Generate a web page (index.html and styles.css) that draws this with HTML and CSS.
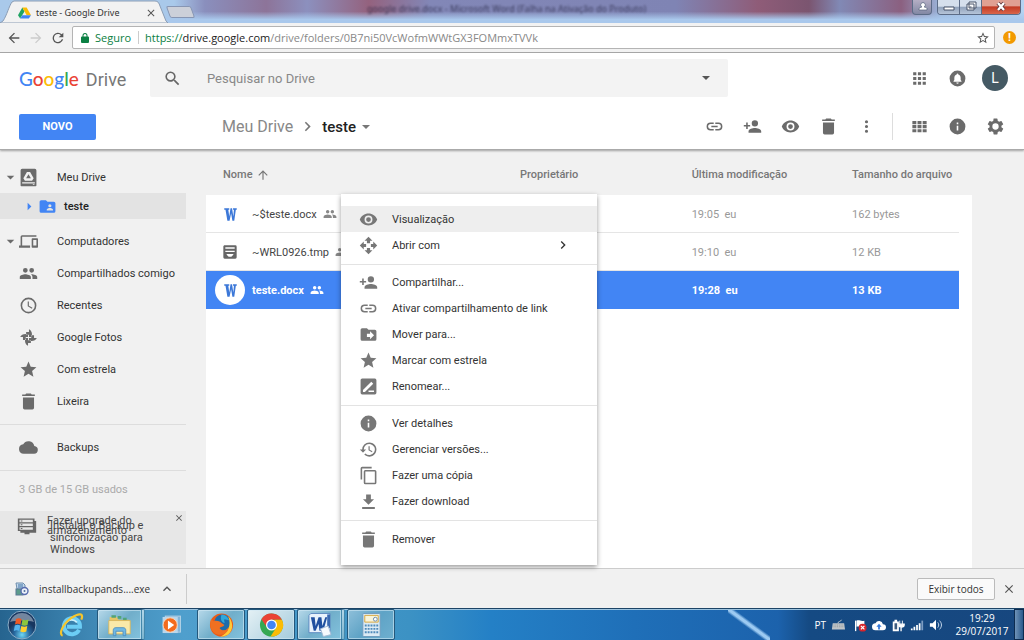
FILE: index.html
```html
<!DOCTYPE html>
<html lang="pt-BR">
<head>
<meta charset="utf-8">
<title>teste - Google Drive</title>
<link rel="stylesheet" href="styles.css">
</head>
<body>
<svg class="sprite" aria-hidden="true">
  <symbol id="search" viewBox="0 0 24 24"><path d="M15.5 14h-.79l-.28-.27A6.47 6.47 0 0 0 16 9.5 6.5 6.5 0 1 0 9.500 16c1.610 0 3.090-.59 4.230-1.570l.27.28v.79l5 4.990L20.490 19l-4.990-5zm-6 0C7.010 14 5 11.990 5 9.500S7.010 5 9.500 5 14 7.010 14 9.500 11.990 14 9.500 14z"/></symbol>
  <symbol id="apps" viewBox="0 0 24 24"><path d="M4 8h4V4H4v4zm6 12h4v-4h-4v4zm-6 0h4v-4H4v4zm0-6h4v-4H4v4zm6 0h4v-4h-4v4zm6-10v4h4V4h-4zm-6 4h4V4h-4v4zm6 6h4v-4h-4v4zm0 6h4v-4h-4v4z"/></symbol>
  <symbol id="bell" viewBox="0 0 24 24"><path fill-rule="evenodd" d="M12 2a10 10 0 1 0 0 20 10 10 0 0 0 0-20zm0 16.500a1.500 1.500 0 0 1-1.500-1.500h3a1.500 1.500 0 0 1-1.500 1.500zM17 16H7v-1l1-1v-2.600c0-2.100 1-3.800 3-4.300v-.5a1 1 0 0 1 2 0v.5c2 .5 3 2.200 3 4.300V14l1 1v1z"/></symbol>
  <symbol id="link" viewBox="0 0 24 24"><path d="M3.900 12c0-1.710 1.390-3.100 3.100-3.100h4V7H7a5 5 0 0 0 0 10h4v-1.900H7A3.100 3.100 0 0 1 3.900 12zM8 13h8v-2H8v2zm9-6h-4v1.900h4a3.100 3.100 0 0 1 0 6.200h-4V17h4a5 5 0 0 0 0-10z"/></symbol>
  <symbol id="person-add" viewBox="0 0 24 24"><path d="M15 12a4 4 0 1 0 0-8 4 4 0 0 0 0 8zm-9-2V7H4v3H1v2h3v3h2v-3h3v-2H6zm9 4c-2.670 0-8 1.340-8 4v2h16v-2c0-2.660-5.330-4-8-4z"/></symbol>
  <symbol id="eye" viewBox="0 0 24 24"><path d="M12 4.500C7 4.500 2.730 7.610 1 12c1.730 4.390 6 7.500 11 7.500s9.270-3.110 11-7.500c-1.730-4.390-6-7.500-11-7.500zM12 17a5 5 0 1 1 0-10 5 5 0 0 1 0 10zm0-8a3 3 0 1 0 0 6 3 3 0 0 0 0-6z"/></symbol>
  <symbol id="trash" viewBox="0 0 24 24"><path d="M5 20a2 2 0 0 0 2 2h10a2 2 0 0 0 2-2V7H5v13zM20 3h-4l-1-1H9L8 3H4v2h16V3z"/></symbol>
  <symbol id="more" viewBox="0 0 24 24"><path d="M12 8a2 2 0 1 0 0-4 2 2 0 0 0 0 4zm0 2a2 2 0 1 0 0 4 2 2 0 0 0 0-4zm0 6a2 2 0 1 0 0 4 2 2 0 0 0 0-4z"/></symbol>
  <symbol id="grid" viewBox="0 0 24 24"><path d="M3 5h5v4H3zM9.500 5h5v4h-5zM16 5h5v4h-5zM3 10.200h5v4H3zM9.500 10.200h5v4h-5zM16 10.200h5v4h-5zM3 15.400h5v4H3zM9.500 15.400h5v4h-5zM16 15.400h5v4h-5z"/></symbol>
  <symbol id="info" viewBox="0 0 24 24"><path d="M12 2a10 10 0 1 0 0 20 10 10 0 0 0 0-20zm1 15h-2v-6h2v6zm0-8h-2V7h2v2z"/></symbol>
  <symbol id="gear" viewBox="0 0 24 24"><path d="M19.430 12.980c.04-.32.07-.64.07-.98s-.03-.66-.07-.98l2.110-1.650c.19-.15.24-.42.12-.64l-2-3.460c-.12-.22-.39-.3-.61-.22l-2.490 1c-.52-.4-1.080-.73-1.690-.98l-.38-2.650A.49.49 0 0 0 14 2h-4c-.25 0-.46.18-.49.42l-.38 2.650c-.61.25-1.170.59-1.690.98l-2.490-1c-.23-.09-.49 0-.61.22l-2 3.460c-.13.22-.07.49.12.64l2.110 1.650c-.04.32-.07.65-.07.98s.03.66.07.98l-2.110 1.650c-.19.15-.24.42-.12.64l2 3.460c.12.22.39.3.61.22l2.490-1c.52.4 1.080.73 1.690.98l.38 2.650c.03.24.24.42.49.42h4c.25 0 .46-.18.49-.42l.38-2.650c.61-.25 1.170-.59 1.690-.98l2.490 1c.23.09.49 0 .61-.22l2-3.460c.12-.22.07-.49-.12-.64l-2.110-1.650zM12 16a4 4 0 1 1 0-8 4 4 0 0 1 0 8z"/></symbol>
  <symbol id="drive" viewBox="0 0 24 24"><path fill-rule="evenodd" d="M4 1h16a2 2 0 0 1 2 2v19a1 1 0 0 1-1 1H3a1 1 0 0 1-1-1V3a2 2 0 0 1 2-2zm0 17v1.500h16V18H4zm6-13L5.500 13l2 3h9l2-3L14 5h-4zm2 3 3 5H9l3-5zm5.500 12.300v1h2v-1h-2z"/></symbol>
  <symbol id="folder-shared" viewBox="0 0 24 24"><path d="M20 6h-8l-2-2H4a2 2 0 0 0-2 2v12a2 2 0 0 0 2 2h16a2 2 0 0 0 2-2V8a2 2 0 0 0-2-2zm-5 3a2 2 0 1 1 0 4 2 2 0 0 1 0-4zm4 8h-8v-1c0-1.330 2.670-2 4-2s4 .67 4 2v1z"/></symbol>
  <symbol id="devices" viewBox="0 0 24 24"><path d="M4 6h18V4H4a2 2 0 0 0-2 2v11H0v3h14v-3H4V6zm19 2h-6a1 1 0 0 0-1 1v10a1 1 0 0 0 1 1h6a1 1 0 0 0 1-1V9a1 1 0 0 0-1-1zm-1 9h-4v-7h4v7z"/></symbol>
  <symbol id="people" viewBox="0 0 24 24"><path d="M16 11a3 3 0 1 0 0-6 3 3 0 0 0 0 6zm-8 0a3 3 0 1 0 0-6 3 3 0 0 0 0 6zm0 2c-2.330 0-7 1.170-7 3.500V19h14v-2.500C15 14.170 10.330 13 8 13zm8 0c-.29 0-.62.02-.97.05 1.160.84 1.970 1.970 1.970 3.450V19h6v-2.500c0-2.330-4.670-3.500-7-3.500z"/></symbol>
  <symbol id="clock" viewBox="0 0 24 24"><path d="M12 2a10 10 0 1 0 0 20 10 10 0 0 0 0-20zm0 18a8 8 0 1 1 0-16 8 8 0 0 1 0 16zm.5-13H11v6l5.250 3.150.75-1.230-4.500-2.670z"/></symbol>
  <symbol id="photos" viewBox="0 0 24 24"><path d="M11.400 11.400H1.500C3 8 8 6.500 11.400 8.500zM12.600 11.400V1.500C16 3 17.500 8 15.500 11.400zM12.600 12.600h9.900C21 16 16 17.500 12.600 15.500zM11.400 12.600v9.900C8 21 6.500 16 8.500 12.600zM12.600 5H9v3.500h3.600zM19 12.600V9h-3.500v3.600zM11.400 19H15v-3.500h-3.600zM5 11.400V15h3.500v-3.600z"/></symbol>
  <symbol id="star" viewBox="0 0 24 24"><path d="M12 17.270 18.180 21l-1.640-7.030L22 9.240l-7.190-.61L12 2 9.190 8.630 2 9.240l5.460 4.730L5.820 21z"/></symbol>
  <symbol id="star-line" viewBox="0 0 24 24"><path d="m22 9.240-7.190-.62L12 2 9.190 8.630 2 9.240l5.460 4.730L5.820 21 12 17.270 18.180 21l-1.630-7.030L22 9.240zM12 15.400l-3.760 2.270 1-4.280-3.320-2.880 4.380-.38L12 6.100l1.710 4.040 4.380.38-3.320 2.880 1 4.280L12 15.400z"/></symbol>
  <symbol id="cloud" viewBox="0 0 24 24"><path d="M19.350 10.040A7.490 7.490 0 0 0 5.350 8.040 6 6 0 0 0 6 20h13a5 5 0 0 0 .35-9.960z"/></symbol>
  <symbol id="storage" viewBox="0 0 24 24"><path fill-rule="evenodd" d="M1 3h20v3h2v14h-8v2H9v-2H4v-2H1V3zm2 1.500v3h16v-3H3zM3 9v3h16V9H3zM3 13.500v3h16v-3H3zM4.500 5.300h2v1.400h-2zm0 4.500h2v1.400h-2zm0 4.500h2v1.400h-2z"/></symbol>
  <symbol id="archive" viewBox="0 0 24 24"><path fill-rule="evenodd" d="M4 2h16a2 2 0 0 1 2 2v16a2 2 0 0 1-2 2H4a2 2 0 0 1-2-2V4c0-1 1-2 2-2zm1 3v2h14V5H5zm0 5v2h14v-2H5zm2 5v1l3 3h4l3-3v-1H7z"/></symbol>
  <symbol id="word" viewBox="0 0 20 24"><path d="M0 2h8v2.500H6.500L8 15l2-13h2.500l2 13 1-10.500H14V2h6v2.500h-1.500L16 22h-3L11 10 8.500 22H5L2 4.500H0z"/></symbol>
  <symbol id="open-with" viewBox="0 0 24 24"><path d="M10 9h4V6h3l-5-5-5 5h3zM9 10H6V7l-5 5 5 5v-3h3zm14 2-5-5v3h-3v4h3v3zM14 15h-4v3H7l5 5 5-5h-3z"/></symbol>
  <symbol id="move" viewBox="0 0 24 24"><path d="M20 6h-8l-2-2H4a2 2 0 0 0-2 2v12a2 2 0 0 0 2 2h16a2 2 0 0 0 2-2V8a2 2 0 0 0-2-2zm-6 12v-3h-4v-4h4V8l5 5-5 5z"/></symbol>
  <symbol id="rename" viewBox="0 0 24 24"><path fill-rule="evenodd" d="M4 2h16a2 2 0 0 1 2 2v16a2 2 0 0 1-2 2H4a2 2 0 0 1-2-2V4c0-1 1-2 2-2zm1 14.500V19h2.500L18 8.500 15.500 6zM12 17v2h7v-2z"/></symbol>
  <symbol id="history" viewBox="0 0 24 24"><path d="M13 3a9 9 0 0 0-9 9H1l3.890 3.890.07.14L9 12H6a7 7 0 1 1 2.060 4.940l-1.420 1.420A9 9 0 1 0 13 3zm-1 5v5l4.280 2.540.72-1.210-3.500-2.080V8H12z"/></symbol>
  <symbol id="copy" viewBox="0 0 24 24"><path d="M16 1H4a2 2 0 0 0-2 2v14h2V3h12V1zm4 4H8a2 2 0 0 0-2 2v14a2 2 0 0 0 2 2h12a2 2 0 0 0 2-2V7a2 2 0 0 0-2-2zm0 16H8V7h12v14z"/></symbol>
  <symbol id="download" viewBox="0 0 24 24"><path d="M19 9h-4V3H9v6H5l7 7zM4 19v2.500h16V19z"/></symbol>
  <symbol id="chevron" viewBox="0 0 24 24"><path d="M10 6 8.590 7.410 13.170 12l-4.580 4.590L10 18l6-6z"/></symbol>
  <symbol id="arrow" viewBox="0 0 24 24"><path d="M20 11H7.830l5.590-5.590L12 4l-8 8 8 8 1.410-1.410L7.830 13H20z"/></symbol>
  <symbol id="reload" viewBox="0 0 24 24"><path d="M17.650 6.350A8 8 0 1 0 19.730 14h-2.080A6 6 0 1 1 12 6c1.660 0 3.140.69 4.220 1.780L13 11h7V4z"/></symbol>
  <symbol id="close" viewBox="0 0 24 24"><path d="M19 6.410 17.590 5 12 10.590 6.410 5 5 6.410 10.590 12 5 17.590 6.410 19 12 13.410 17.590 19 19 17.590 13.410 12z"/></symbol>
  <symbol id="lock" viewBox="0 0 24 24"><path d="M18 9h-1V7A5 5 0 0 0 7 7v2H6a2 2 0 0 0-2 2v9a2 2 0 0 0 2 2h12a2 2 0 0 0 2-2v-9a2 2 0 0 0-2-2zm-3 0H9V7a3 3 0 0 1 6 0z"/></symbol>
  <symbol id="down" viewBox="0 0 24 24"><path d="M6 9l6 6 6-6z"/></symbol>
</svg>

<div class="titlebar">
  <div class="tab">
    <svg class="tab-shape" viewBox="0 0 168 23" preserveAspectRatio="none"><path d="M0 23 3 21C7 15 9 6 12 2L14 1H155C158 1 159 3 160 6L166 21 168 23z" fill="#f2f2f2" stroke="#8b9db5"/></svg>
    <svg class="favicon" viewBox="0 0 24 22"><path fill="#20a464" d="M8 1 0 15l4 6 8-13z"/><path fill="#fbbc05" d="M8 1h8l8 14h-8z"/><path fill="#4285f4" d="M8 15h16l-4 6H4z"/></svg>
    <span class="tab-title">teste - Google Drive</span>
    <button class="plain" aria-label="Fechar aba"><svg class="ic12"><use href="#close"/></svg></button>
  </div>
  <button class="new-tab" aria-label="Nova aba"></button>
  <span class="ghost">google drive.docx - Microsoft Word (Falha na Ativação do Produto)</span>
  <div class="win-controls">
    <button class="win user" aria-label="Usuário"><svg viewBox="0 0 20 14"><path d="M6 10V8.500C7 7.500 8.500 7 9 7a2.300 2.300 0 1 1 2 0c1 0 2.500.5 3 1.500V10z" fill="#fff" stroke="#536078" stroke-width=".7"/></svg></button>
    <div class="win-group">
      <button class="win" aria-label="Minimizar"><svg viewBox="0 0 22 14"><path d="M6 7h10v3H6z" fill="#fff" stroke="#465268"/></svg></button>
      <button class="win" aria-label="Restaurar"><svg viewBox="0 0 22 14"><path d="M9 2h7v6h-7zM7 4h7v6H7z" fill="#fff" stroke="#465268"/><path d="M9.500 6.500h2v1h-2z" fill="#465268"/></svg></button>
      <button class="win red" aria-label="Fechar"><svg viewBox="0 0 38 14"><path d="m16 3 6 7m0-7-6 7" stroke="#5a3035" stroke-width="4"/><path d="m16 3 6 7m0-7-6 7" stroke="#fff" stroke-width="2.400"/></svg></button>
    </div>
  </div>
</div>

<div class="toolbar">
  <button class="plain" aria-label="Voltar"><svg class="ic16"><use href="#arrow"/></svg></button>
  <button class="plain off" aria-label="Avançar"><svg class="ic16 flip"><use href="#arrow"/></svg></button>
  <button class="plain" aria-label="Recarregar"><svg class="ic16"><use href="#reload"/></svg></button>
  <div class="address">
    <svg class="ic12 green"><use href="#lock"/></svg>
    <span class="secure">Seguro</span>
    <span class="url"><span class="green">https://</span><b>drive.google.com</b>/drive/folders/0B7ni50VcWofmWWtGX3FOMmxTVVk</span>
    <button class="plain" aria-label="Favoritar"><svg class="ic14"><use href="#star-line"/></svg></button>
  </div>
  <button class="alert" aria-label="Atualizar">!</button>
</div>

<header class="header">
  <div class="row search-row">
    <a class="logo" href="#"><span class="google"><i class="b">G</i><i class="r">o</i><i class="y">o</i><i class="b">g</i><i class="g">l</i><i class="r">e</i></span><span class="product">Drive</span></a>
    <div class="search">
      <svg class="ic19"><use href="#search"/></svg>
      <input type="text" placeholder="Pesquisar no Drive" aria-label="Pesquisar no Drive">
      <button class="plain" aria-label="Opções de pesquisa"><svg class="ic16"><use href="#down"/></svg></button>
    </div>
    <div class="actions">
      <button class="tool" aria-label="Apps"><svg class="ic19"><use href="#apps"/></svg></button>
      <button class="tool" aria-label="Notificações"><svg class="ic19"><use href="#bell"/></svg></button>
      <button class="tool" aria-label="Conta"><span class="avatar">L</span></button>
    </div>
  </div>
  <div class="row crumb-row">
    <button class="new">NOVO</button>
    <nav class="crumbs"><a href="#">Meu Drive</a><svg class="ic19"><use href="#chevron"/></svg><button class="current">teste<svg class="ic16"><use href="#down"/></svg></button></nav>
    <div class="actions">
      <button class="tool" aria-label="Link"><svg class="ic19"><use href="#link"/></svg></button>
      <button class="tool" aria-label="Compartilhar"><svg class="ic19"><use href="#person-add"/></svg></button>
      <button class="tool" aria-label="Visualizar"><svg class="ic19"><use href="#eye"/></svg></button>
      <button class="tool" aria-label="Remover"><svg class="ic19"><use href="#trash"/></svg></button>
      <button class="tool" aria-label="Mais ações"><svg class="ic19"><use href="#more"/></svg></button>
      <span class="divider"></span>
      <button class="tool" aria-label="Grade"><svg class="ic19"><use href="#grid"/></svg></button>
      <button class="tool" aria-label="Detalhes"><svg class="ic19"><use href="#info"/></svg></button>
      <button class="tool" aria-label="Configurações"><svg class="ic19"><use href="#gear"/></svg></button>
    </div>
  </div>
</header>

<div class="main">
  <aside class="sidebar">
    <nav>
      <a class="nav" href="#"><svg class="caret"><use href="#down"/></svg><svg class="ic19"><use href="#drive"/></svg><span>Meu Drive</span></a>
      <a class="nav child" href="#"><svg class="caret"><use href="#down"/></svg><svg class="ic19"><use href="#folder-shared"/></svg><span>teste</span></a>
      <a class="nav" href="#"><svg class="caret"><use href="#down"/></svg><svg class="ic19"><use href="#devices"/></svg><span>Computadores</span></a>
      <a class="nav" href="#"><i class="caret"></i><svg class="ic19"><use href="#people"/></svg><span>Compartilhados comigo</span></a>
      <a class="nav" href="#"><i class="caret"></i><svg class="ic19"><use href="#clock"/></svg><span>Recentes</span></a>
      <a class="nav" href="#"><i class="caret"></i><svg class="ic19"><use href="#photos"/></svg><span>Google Fotos</span></a>
      <a class="nav" href="#"><i class="caret"></i><svg class="ic19"><use href="#star"/></svg><span>Com estrela</span></a>
      <a class="nav" href="#"><i class="caret"></i><svg class="ic19"><use href="#trash"/></svg><span>Lixeira</span></a>
      <hr>
      <a class="nav" href="#"><i class="caret"></i><svg class="ic19"><use href="#cloud"/></svg><span>Backups</span></a>
      <hr>
    </nav>
    <p class="quota">3 GB de 15 GB usados</p>
    <div class="promo">
      <svg class="ic20"><use href="#storage"/></svg>
      <a class="upgrade" href="#">Fazer upgrade do<br>armazenamento</a>
      <a class="install" href="#">Instalar o Backup e<br>sincronização para<br>Windows</a>
      <button class="plain" aria-label="Dispensar"><svg class="ic10"><use href="#close"/></svg></button>
    </div>
  </aside>

  <main class="files">
    <table>
      <thead><tr><th class="c-name"><span class="sorted">Nome<svg class="ic14"><use href="#arrow"/></svg></span></th><th class="c-owner">Proprietário</th><th class="c-date">Última modificação</th><th>Tamanho do arquivo</th></tr></thead>
      <tbody>
        <tr><td><div class="file"><span class="type"><svg class="word"><use href="#word"/></svg></span>~$teste.docx<svg class="ic14 shared"><use href="#people"/></svg></div></td><td></td><td>19:05 &nbsp;eu</td><td>162 bytes</td></tr>
        <tr><td><div class="file"><span class="type"><svg class="ic16"><use href="#archive"/></svg></span>~WRL0926.tmp<svg class="ic14 shared"><use href="#people"/></svg></div></td><td></td><td>19:10 &nbsp;eu</td><td>12 KB</td></tr>
        <tr class="selected"><td><div class="file"><span class="type"><svg class="word"><use href="#word"/></svg></span>teste.docx<svg class="ic14 shared"><use href="#people"/></svg></div></td><td></td><td>19:28 &nbsp;eu</td><td>13 KB</td></tr>
      </tbody>
    </table>
  </main>

  <div class="menu" role="menu">
    <div class="group two">
      <button class="active" role="menuitem"><svg class="ic19"><use href="#eye"/></svg>Visualização</button>
      <button role="menuitem"><svg class="ic19"><use href="#open-with"/></svg>Abrir com<svg class="ic16 sub"><use href="#chevron"/></svg></button>
    </div>
    <div class="group five">
      <button role="menuitem"><svg class="ic19"><use href="#person-add"/></svg>Compartilhar...</button>
      <button role="menuitem"><svg class="ic19"><use href="#link"/></svg>Ativar compartilhamento de link</button>
      <button role="menuitem"><svg class="ic19"><use href="#move"/></svg>Mover para...</button>
      <button role="menuitem"><svg class="ic19"><use href="#star"/></svg>Marcar com estrela</button>
      <button role="menuitem"><svg class="ic19"><use href="#rename"/></svg>Renomear...</button>
    </div>
    <div class="group four">
      <button role="menuitem"><svg class="ic19"><use href="#info"/></svg>Ver detalhes</button>
      <button role="menuitem"><svg class="ic19"><use href="#history"/></svg>Gerenciar versões...</button>
      <button role="menuitem"><svg class="ic19"><use href="#copy"/></svg>Fazer uma cópia</button>
      <button role="menuitem"><svg class="ic19"><use href="#download"/></svg>Fazer download</button>
    </div>
    <div class="group one">
      <button role="menuitem"><svg class="ic19"><use href="#trash"/></svg>Remover</button>
    </div>
  </div>
</div>

<div class="downloads">
  <div class="download">
    <svg class="exe" viewBox="0 0 14 14"><path d="M1 1h7l2 2v4H2z" fill="#c4d9ec" stroke="#6d8dac"/><path d="M3 3h5M3 5h5" stroke="#3f71a4"/><rect x="1" y="7" width="7" height="6" fill="#5c9b8c" stroke="#5a7894"/><circle cx="9.500" cy="9" r="3.500" fill="#edf2fa" stroke="#586cae" stroke-width="1.400"/><circle cx="9.500" cy="9" r="1" fill="#53709d"/></svg>
    <span>installbackupands....exe</span>
    <button class="plain" aria-label="Opções"><svg class="ic16 up"><use href="#chevron"/></svg></button>
  </div>
  <button class="show-all">Exibir todos</button>
  <button class="plain" aria-label="Fechar barra"><svg class="ic14"><use href="#close"/></svg></button>
</div>

<footer class="taskbar">
  <button class="start" aria-label="Iniciar"><svg viewBox="0 0 30 30"><defs><radialGradient id="orb" cx=".5" cy=".85"><stop offset="0" stop-color="#6fd8f5"/><stop offset=".55" stop-color="#28699f"/><stop offset="1" stop-color="#17365f"/></radialGradient></defs><circle cx="15" cy="15" r="14" fill="url(#orb)" stroke="#8badc7"/><path d="M3 12a12.500 12.500 0 0 1 24 0c-7-2-17-2-24 0z" fill="#fff" opacity=".4"/><path d="M9 9c2-1.300 4-1 5.500 0l-1 5.500c-2-1-3.600-1-5.500 0z" fill="#ee5a24"/><path d="M15.500 9.500c2 1 4 1 6 0l-1 5.500c-2 1-4 1-6 0z" fill="#8cc63e"/><path d="M7.800 15.500c2-1 3.700-1 5.500 0l-1 5.500c-1.800-1-3.600-1-5.500 0z" fill="#56b5ee"/><path d="M14.300 16c2 1 4 1 6 0l-1 5.500c-2 1-4 1-6 0z" fill="#ffcf2e"/></svg></button>
  <button class="task free" aria-label="Internet Explorer"><svg viewBox="0 0 28 28"><path d="M22.500 19.500A9 9 0 1 1 23.500 16H9" fill="none" stroke="#6ccdf5" stroke-width="4.500"/><path d="M8 11a8 8 0 0 1 12 0" fill="none" stroke="#c9effc" stroke-width="2"/><path d="M4 26C-1 24 5 12 14 6S28 1 25 8" fill="none" stroke="#f5c52c" stroke-width="2.500"/></svg></button>
  <button class="task stack" aria-label="Explorador"><svg viewBox="0 0 28 26"><path d="M3 4h8l2 3h12v15H3z" fill="#e5c568"/><path d="M5 2h5v3H5zM12 3h4v3h-4zM18 5h4v3h-4z" fill="#52a476"/><path d="M2 8h24v15H2z" fill="#fae9a9" stroke="#d9b65b"/><path d="M7 25v-6c0-2 1-3 3-3h8c2 0 3 1 3 3v6h-3v-5h-8v5z" fill="#70b9e4" stroke="#4d8fc0"/></svg></button>
  <button class="task free" aria-label="Media Player"><svg viewBox="0 0 28 26"><rect x="7" y="3" width="17" height="18" fill="#84b4d8" stroke="#b9d5e8"/><rect x="4" y="4" width="17" height="18" fill="#b8d6ec"/><circle cx="12.500" cy="13" r="8" fill="#f36b1d" stroke="#fbd9bd"/><path d="m10 8 7 5-7 5z" fill="#fff"/></svg></button>
  <button class="task" aria-label="Firefox"><svg viewBox="0 0 26 26"><circle cx="13" cy="13" r="12" fill="#e95b18"/><circle cx="14" cy="10.500" r="8.500" fill="#1d6cab"/><path d="M20 4c5 5 6 14 0 19-3 2-6 2-8 2 7-3 12-11 8-21z" fill="#ffcb38"/><path d="M2 7l3 2c3-1 6 0 8 2l3 2c-1 2-4 2-5 3 2 4 8 3 9-1 1 6-6 9-11 8C2 21 0 14 2 7z" fill="#ef7022"/><path d="M13 2c4 0 7 3 8 6l-5-1c-1 2 1 3 0 4-2-1-5-3-3-9z" fill="#2fa8dc"/></svg></button>
  <button class="task lit" aria-label="Chrome"><svg viewBox="0 0 26 26"><circle cx="13" cy="13" r="12" fill="#34a853"/><path d="M13 1a12 12 0 0 1 10.800 6.500H13L8 15 2.500 7A12 12 0 0 1 13 1z" fill="#ea4335"/><path d="M23.800 7.500A12 12 0 0 1 12 25l6-9.500-2-8z" fill="#fbbc05"/><circle cx="13" cy="13" r="5.700" fill="#fff"/><circle cx="13" cy="13" r="4.500" fill="#4285f4"/></svg></button>
  <button class="task stack" aria-label="Word"><svg viewBox="0 0 26 26"><path d="M4 1h20v20H2V3z" fill="#e8f2fc" stroke="#5b88bf"/><path d="M21 2h3v14h-3z" fill="#3968b1"/><path d="M4 5h4l1 9 3-9h3l1 9 3-9h2l-4 14h-4l-1-7-3 7H7z" fill="#2050a0"/><path d="m14 17 8-3 3 9-8 2z" fill="#f6f9fd" stroke="#a6bbd5"/></svg></button>
  <button class="task calc" aria-label="Calculadora"><svg viewBox="0 0 26 26"><rect x="4" y="1" width="18" height="24" rx="1" fill="#dcebf5" stroke="#6c9bbd"/><path d="M6 3h14v7H6z" fill="#f9f4d9" stroke="#d7a83f"/><circle cx="17" cy="7" r="2" fill="#fff" stroke="#6a8aaa"/><path d="M6 13.500h14M6 17h14M6 20.500h14" stroke="#4f8bbb" stroke-width="2" stroke-dasharray="2 1"/></svg></button>
  <div class="tray">
    <span>PT</span>
    <svg viewBox="0 0 16 16"><path d="M2 6h13l1 7H1z" fill="#bfc4c8"/><path d="M3 8h11M3 10h11" stroke="#8b9297" stroke-dasharray="1 1"/><path d="M8 6c0-3 3-1 4-4" fill="none" stroke="#c6cdd2"/></svg>
    <svg class="flag" viewBox="0 0 16 16"><path d="M3 3v12" stroke="#fff" stroke-width="1.500"/><path d="M4 3c3-1 5 1 9 0v7c-4 1-6-1-9 0z" fill="#fff"/><circle cx="11" cy="11" r="4.500" fill="#d6252c"/><path d="m9 9 4 4m0-4-4 4" stroke="#fff" stroke-width="1.400"/></svg>
    <svg viewBox="0 0 16 16"><path d="M12.500 7A4.500 4.500 0 0 0 4 6a4 4 0 0 0 0 8h8.500a3.500 3.500 0 0 0 0-7z" fill="#fff"/><path d="M8 6.500 11 10H9v3H7v-3H5z" fill="#3478d9"/></svg>
    <svg viewBox="0 0 16 16"><path d="M2 4h7v11H2zM4 2h3v2H4z" fill="#fff"/><path d="M4 6h3v7H4z" fill="#3e5d80"/><path d="M10 3v4m3-4v4" stroke="#fff" fill="none"/><path d="M8 7h7v1c0 3-6 3-6 0M11.500 10v5" stroke="#fff" stroke-width="1.500" fill="#fff"/></svg>
    <svg viewBox="0 0 16 16"><path d="M1 12h2v2H1zM4 10h2v4H4zM7 8h2v6H7zM10 6h2v8h-2z" fill="#fff"/><path d="M13 3h2v11h-2z" fill="#7c9cc2"/></svg>
    <svg viewBox="0 0 16 16"><path d="M1 6h3l4-4v12l-4-4H1z" fill="#fff"/><path d="M10 5c1.500 2 1.500 4 0 6m2-8c3 3 3 7 0 10" stroke="#dce9f7" fill="none"/></svg>
    <div class="datetime"><span>19:29</span><span>29/07/2017</span></div>
  </div>
  <button class="desktop" aria-label="Mostrar área de trabalho"></button>
</footer>
</body>
</html>
```

FILE: styles.css
```css
* { box-sizing: border-box; }
body {
  margin: 0;
  min-height: 100vh;
  display: flex;
  flex-direction: column;
  background: #f1f1f1;
  color: #444;
  font: 11px Roboto, "Liberation Sans", sans-serif;
}
a { color: inherit; text-decoration: none; }
button { font: inherit; color: inherit; border: 0; background: none; padding: 0; }
svg { display: block; flex: none; fill: currentColor; }
.sprite { display: none; }
.plain { display: flex; align-items: center; justify-content: center; color: #555; }
.ic10 { width: 10px; height: 10px; }
.ic12 { width: 12px; height: 12px; }
.ic14 { width: 14px; height: 14px; }
.ic16 { width: 16px; height: 16px; }
.ic19 { width: 19px; height: 19px; }
.ic20 { width: 20px; height: 20px; }
.green { color: #0b8043; }
.flip { transform: scaleX(-1); }
.up { transform: rotate(-90deg); }

/* browser window */
.titlebar {
  position: relative;
  display: flex;
  height: 23px;
  overflow: hidden;
  background:
    linear-gradient(#a9c8ec00 50%, #a9c8ec 85%),
    linear-gradient(90deg, #a9c9ea 0, #a9c9ea 17%, #8a8fbd 20%, #8d7499 26%, #8c90be 30%, #94627e 36%, #8287b7 42%, #7f84b4 66%, #8f5c78 74%, #7b5570 79%, #8189b5 82%, #8b6080 88%, #9bb8de 92%, #b4d4f3);
}
.tab { position: relative; display: flex; align-items: center; width: 168px; padding: 2px 11px 0 18px; gap: 5px; font: 9px "Noto Sans", sans-serif; color: #333; }
.tab-shape { position: absolute; inset: 0; width: 100%; height: 100%; }
.favicon { position: relative; width: 13px; height: 12px; }
.tab-title { position: relative; flex: 1; white-space: nowrap; }
.tab .plain { position: relative; }
.new-tab { width: 25px; height: 12px; margin-top: 6px; background: #ccd0d9; border: 1px solid #8796b3; border-radius: 2px; transform: skewX(20deg); }
.ghost { margin: 2px auto 0 174px; font: 9px/14px "Noto Sans", sans-serif; color: #20203c; filter: blur(1px); opacity: .7; white-space: nowrap; }
.win-controls { display: flex; gap: 5px; height: 15px; padding-right: 3px; }
.win { display: block; height: 14px; background: linear-gradient(#d5dfec 45%, #91a2bb 50%, #b5c4d8); border-right: 1px solid #5c6c87; }
.win svg { height: 100%; width: auto; margin: auto; }
.win.user, .win-group { height: 15px; border: 1px solid #5c6c87; border-top: 0; border-radius: 0 0 4px 4px; overflow: hidden; }
.win.user { width: 20px; background: linear-gradient(#b4aec4, #8288a4); }
.win-group { display: flex; }
.win-group .win { width: 22px; }
.win-group .red { width: 38px; border: 0; background: linear-gradient(#e0a092 40%, #c33c25 50%, #d9654a); }

.toolbar { display: flex; align-items: center; height: 30px; padding: 0 8px 0 6px; gap: 6px; background: #f2f2f2; border-bottom: 1px solid #aaa; }
.toolbar .off { color: #ccc; }
.address { flex: 1; display: flex; align-items: center; height: 23px; padding: 0 4px 0 6px; background: #fff; border: 1px solid #b4b4b4; border-radius: 2px; font: 11px "Open Sans", "Noto Sans", sans-serif; }
.secure { margin-left: 4px; padding-right: 7px; border-right: 1px solid #ccc; color: #0b8043; line-height: 13px; }
.url { flex: 1; margin-left: 6px; color: #888; }
.url b { font-weight: 400; color: #222; }
.alert { width: 13px; height: 13px; border-radius: 50%; background: #f29900; color: #fff; font-weight: 700; line-height: 13px; margin-left: 2px; }

/* drive header */
.header { position: relative; z-index: 1; background: #fff; padding-bottom: 3px; border-bottom: 1px solid #aaa; box-shadow: 0 1px 2px #0005; }
.row { display: flex; align-items: center; padding: 0 10px 0 19px; }
.search-row { height: 50px; }
.crumb-row { height: 43px; padding-top: 4px; }
.logo { display: flex; align-items: baseline; width: 131px; gap: 7px; }
.google { font: 500 19px Lato, sans-serif; }
.google i { font-style: normal; }
.b { color: #4285f4; }
.r { color: #ea4335; }
.y { color: #fbbc05; }
.g { color: #34a853; }
.product { font-size: 18px; color: #777; }
.search { flex: 0 1 578px; display: flex; align-items: center; height: 38px; padding: 0 14px 0 13px; background: #f3f3f3; border-radius: 2px; color: #666; }
.search input { flex: 1; min-width: 0; margin-left: 25px; padding: 0; border: 0; background: none; font: 13px Roboto, sans-serif; }
.search input::placeholder { color: #888; opacity: 1; }
.actions { display: flex; align-items: center; margin-left: auto; color: #6b6b6b; }
.tool { display: flex; justify-content: center; align-items: center; width: 38px; height: 30px; }
.avatar { width: 26px; height: 26px; border-radius: 50%; background: #455a64; color: #fff; font-size: 14px; line-height: 26px; }
.divider { width: 1px; height: 27px; margin: 0 7px; background: #ddd; }
.new { width: 77px; height: 26px; background: #4285f4; border-radius: 2px; color: #fff; font-weight: 700; }
.crumbs { display: flex; align-items: center; margin-left: 126px; font-size: 16px; color: #888; gap: 5px; }
.crumbs > svg { color: #777; }
.current { display: flex; align-items: center; gap: 2px; color: #222; font-size: 15px; font-weight: 500; }
.current svg { color: #777; }

/* body */
.main { position: relative; flex: 1; display: flex; gap: 20px; padding-right: 52px; }
.sidebar { width: 186px; padding-top: 11px; display: flex; flex-direction: column; }
.nav { display: flex; align-items: center; height: 32px; padding-left: 3px; color: #333; }
.nav .ic19, .nav .caret { color: #6b6b6b; }
.nav .caret { width: 15px; height: 15px; margin-right: 1px; }
.nav span { margin-left: 19px; }
.nav.child { height: 26px; margin-bottom: 6px; padding-left: 22px; background: #e3e3e3; color: #222; font-weight: 500; }
.nav.child .ic19, .nav.child .caret { color: #4285f4; }
.nav.child .caret { transform: rotate(-90deg); }
.nav.child span { margin-left: 7px; }
.sidebar hr { margin: 7px 0 6px; border: 0; border-top: 1px solid #ddd; }
.quota { margin: 6px 0 15px 19px; color: #aaa; line-height: 13px; }
.promo { position: relative; height: 53px; background: #e7e7e7; padding: 5px 0 0 17px; color: #444; }
.promo .ic20 { color: #666; }
.promo a { position: absolute; white-space: nowrap; }
.upgrade { left: 47px; top: 5px; line-height: 10px; }
.install { left: 50px; top: 9px; line-height: 12px; }
.promo .plain { position: absolute; right: 2px; top: 2px; }

.files { flex: 1; background: linear-gradient(#f1f1f1 45px, #fff 45px); }
table { width: calc(100% - 13px); table-layout: fixed; border-collapse: collapse; }
th { height: 45px; padding: 4px 0 0; text-align: left; font-weight: 500; color: #777; white-space: nowrap; }
.c-name { width: 41.7%; padding-left: 17px; }
.c-owner { width: 22.8%; }
.c-date { width: 21.3%; }
.sorted { display: flex; align-items: center; gap: 3px; }
.sorted svg { transform: rotate(90deg); }
td { height: 38px; padding: 0; color: #999; }
tbody tr { box-shadow: inset 0 -1px #e5e5e5; }
.file { display: flex; align-items: center; color: #444; }
.type { display: flex; align-items: center; justify-content: center; width: 30px; height: 30px; margin: 0 7px 0 9px; border-radius: 50%; color: #666; }
.word { width: 13px; height: 15px; color: #3c78d8; }
.shared { margin-left: 6px; color: #888; }
.selected { background: #4285f4; box-shadow: none; font-weight: 700; }
.selected td, .selected .file, .selected .shared { color: #fff; }
.selected .type { background: #fff; }

.menu { position: absolute; z-index: 2; left: 341px; top: 44px; width: 256px; padding: 12px 0 13px; background: #fff; box-shadow: 0 2px 5px #0006; color: #333; }
.group { display: grid; grid-auto-rows: 1fr; }
.group + .group { margin-top: 6px; padding-top: 5px; border-top: 1px solid #e3e3e3; }
.group.two { height: 52px; }
.group.five { height: 135px; }
.group.four { height: 109px; }
.group.one { height: 32px; }
.menu button { display: flex; align-items: center; padding-left: 18px; text-align: left; }
.menu button > .ic19 { margin-right: 14px; color: #777; }
.menu .active { background: #eee; }
.menu .sub { margin-left: auto; margin-right: 26px; }

/* download shelf */
.downloads { display: flex; align-items: center; height: 40px; padding: 0 8px 0 15px; background: #f1f1f1; border-top: 1px solid #ccc; color: #333; font: 10px "Open Sans", "Noto Sans", sans-serif; }
.download { display: flex; align-items: center; height: 30px; padding-right: 11px; border-right: 1px solid #ccc; }
.exe { width: 14px; height: 14px; margin-right: 10px; }
.download .plain { margin-left: 9px; }
.show-all { width: 78px; height: 22px; margin: 0 7px 0 auto; background: #fafafa; border: 1px solid #bbb; border-radius: 2px; }

/* taskbar */
.taskbar {
  display: flex;
  height: 32px;
  padding-left: 7px;
  border-top: 1px solid #1d4466;
  box-shadow: inset 0 1px #9cc4e0;
  background:
    linear-gradient(to top right, #9ccaf200 43%, #9ccaf2 48% 52%, #9ccaf200 57%) 728px 0 / 42px 100% no-repeat,
    linear-gradient(90deg, #26648f 0, #3f88b5 9%, #4f9fcd 18%, #3c92c4 40%, #2480c6 48%, #1f6fb8 62%, #1c62ac 76%, #154a83 79%, #17477f 100%);
}
.start { width: 30px; margin-right: 10px; }
.start svg { width: 30px; height: 30px; }
.task { display: flex; align-items: center; justify-content: center; width: 48px; margin-right: 2px; border: 1px solid #24587c; box-shadow: inset 0 0 0 1px #d2e9f599; background: linear-gradient(135deg, #b7d9ea, #71aeca 50%, #82c2dd); border-radius: 2px; }
.task svg { width: 25px; height: 26px; }
.free { border: 0; background: none; box-shadow: none; }
.lit { background: linear-gradient(135deg, #e4f1f5, #a5cbdc); }
.stack { border-right: 4px double #4388ac; }
.calc { background: linear-gradient(135deg, #8fc0da, #5fa3c6 50%, #6fb0cf); }
.tray { margin-left: auto; display: flex; align-items: center; gap: 5px; color: #fff; font: 10px "Open Sans", "Noto Sans", sans-serif; }
.tray svg { width: 14px; height: 14px; }
.tray .flag { margin-left: 3px; }
.datetime { display: flex; flex-direction: column; align-items: center; width: 52px; margin: 0 6px 0 8px; line-height: 13px; }
.desktop { width: 10px; border: 1px solid #0d2c50; background: linear-gradient(90deg, #6f93b8, #2b5a8c); }
```
